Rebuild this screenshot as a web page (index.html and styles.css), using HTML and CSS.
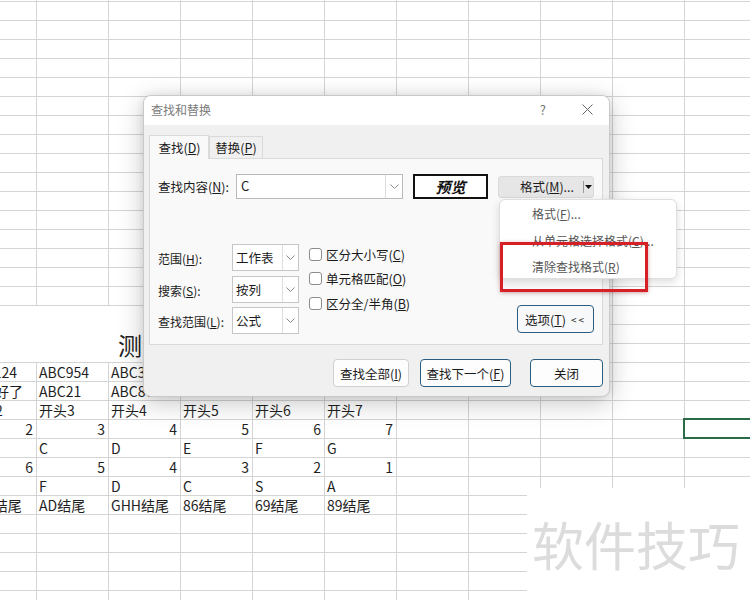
FILE: index.html
```html
<!DOCTYPE html>
<html lang="zh-CN">
<head>
<meta charset="utf-8">
<title>查找和替换</title>
<link rel="stylesheet" href="styles.css">
</head>
<body>
<div class="sheet">
  <div class="table">
    <div class="title-row"><span>测试数据</span></div>
    <div class="row"><div class="cell">ABC124</div><div class="cell">ABC954</div><div class="cell">ABC321</div><div class="cell">ABC66</div><div class="cell">ABC77</div><div class="cell">ABC88</div></div>
    <div class="row"><div class="cell">准备好了</div><div class="cell">ABC21</div><div class="cell">ABC87</div><div class="cell">ABC12</div><div class="cell">ABC13</div><div class="cell">ABC14</div></div>
    <div class="row"><div class="cell">开头2</div><div class="cell">开头3</div><div class="cell">开头4</div><div class="cell">开头5</div><div class="cell">开头6</div><div class="cell">开头7</div></div>
    <div class="row"><div class="cell num">2</div><div class="cell num">3</div><div class="cell num">4</div><div class="cell num">5</div><div class="cell num">6</div><div class="cell num">7</div></div>
    <div class="row"><div class="cell">B</div><div class="cell">C</div><div class="cell">D</div><div class="cell">E</div><div class="cell">F</div><div class="cell">G</div></div>
    <div class="row"><div class="cell num">6</div><div class="cell num">5</div><div class="cell num">4</div><div class="cell num">3</div><div class="cell num">2</div><div class="cell num">1</div></div>
    <div class="row"><div class="cell">G</div><div class="cell">F</div><div class="cell">D</div><div class="cell">C</div><div class="cell">S</div><div class="cell">A</div></div>
    <div class="row"><div class="cell">ABC结尾</div><div class="cell">AD结尾</div><div class="cell">GHH结尾</div><div class="cell">86结尾</div><div class="cell">69结尾</div><div class="cell">89结尾</div></div>
  </div>

  <div class="selected-cell"></div>
  <div class="watermark">软件技巧</div>

  <div class="dialog">
    <div class="titlebar">
      <span class="dlg-title">查找和替换</span>
      <span class="help">?</span>
      <svg class="close" width="11" height="11" viewBox="0 0 11 11"><path d="M0.5 0.5L10.5 10.5M10.5 0.5L0.5 10.5"/></svg>
    </div>
    <div class="dlg-body">
      <div class="tabs">
        <div class="tab active"><span>查找(<u>D</u>)</span></div>
        <div class="tab"><span>替换(<u>P</u>)</span></div>
      </div>
      <div class="panel">
        <div class="find-row">
          <span class="find-label">查找内容(<u>N</u>):</span>
          <div class="combo">
            <span class="combo-text">C</span>
            <span class="combo-btn"><svg width="9" height="5" viewBox="0 0 9 5"><path d="M0.5 0.5L4.5 4.5L8.5 0.5"/></svg></span>
          </div>
          <div class="preview">预览</div>
          <div class="format-btn">
            <span class="format-text">格式(<u>M</u>)...</span>
            <span class="format-arrow"><svg width="7" height="4" viewBox="0 0 7 4"><path d="M0 0H7L3.5 4Z"/></svg></span>
          </div>
        </div>
        <div class="opts">
          <div class="opt-grid">
            <span class="opt-label">范围(<u>H</u>):</span>
            <div class="select"><span class="select-text">工作表</span><span class="select-btn"><svg width="9" height="5" viewBox="0 0 9 5"><path d="M0.5 0.5L4.5 4.5L8.5 0.5"/></svg></span></div>
            <span class="opt-label">搜索(<u>S</u>):</span>
            <div class="select"><span class="select-text">按列</span><span class="select-btn"><svg width="9" height="5" viewBox="0 0 9 5"><path d="M0.5 0.5L4.5 4.5L8.5 0.5"/></svg></span></div>
            <span class="opt-label">查找范围(<u>L</u>):</span>
            <div class="select"><span class="select-text">公式</span><span class="select-btn"><svg width="9" height="5" viewBox="0 0 9 5"><path d="M0.5 0.5L4.5 4.5L8.5 0.5"/></svg></span></div>
          </div>
          <div class="checks">
            <div class="check"><span class="box"></span><span class="check-text">区分大小写(<u>C</u>)</span></div>
            <div class="check"><span class="box"></span><span class="check-text">单元格匹配(<u>O</u>)</span></div>
            <div class="check"><span class="box"></span><span class="check-text">区分全/半角(<u>B</u>)</span></div>
          </div>
          <div class="btn accent opt-btn"><span>选项(<u>T</u>)</span><span class="chev">&lt;&lt;</span></div>
        </div>
      </div>
      <div class="actions">
        <div class="btn find-all"><span>查找全部(<u>I</u>)</span></div>
        <div class="btn accent find-next"><span>查找下一个(<u>F</u>)</span></div>
        <div class="btn accent close-btn"><span>关闭</span></div>
      </div>
    </div>
  </div>

  <div class="menu">
    <div class="menu-item">格式(<u>F</u>)...</div>
    <div class="menu-item">从单元格选择格式(<u>C</u>)...</div>
    <div class="menu-item">清除查找格式(<u>R</u>)</div>
  </div>
  <div class="highlight"></div>
</div>
</body>
</html>
```

FILE: styles.css
```css
* { box-sizing: border-box; }
html, body { margin: 0; padding: 0; }
body {
  width: 750px;
  height: 600px;
  overflow: hidden;
  font-family: "Noto Sans CJK SC", "Noto Sans", sans-serif;
  color: #1b1b1b;
}
u { text-decoration: underline; text-underline-offset: 1px; }

/* spreadsheet */
.sheet {
  position: relative;
  width: 750px;
  height: 600px;
  overflow: hidden;
  padding-top: 306px;
  background-color: #fff;
  background-image:
    linear-gradient(to right, #d4d4d4 1px, transparent 1px),
    linear-gradient(to bottom, #d4d4d4 1px, transparent 1px);
  background-size: 72px 19px;
  background-position: 36px 1px;
}
.table { margin-left: -36px; }
.title-row {
  width: 432px;
  height: 56px;
  background: #fff;
  display: flex;
  align-items: flex-end;
  padding-left: 154px;
  padding-bottom: 2px;
  font-size: 24px;
  line-height: 30px;
  color: #222;
}
.row { display: flex; height: 19px; }
.cell {
  width: 72px;
  flex: none;
  font-size: 14px;
  line-height: 17px;
  padding: 2px 3px 0;
  white-space: nowrap;
  overflow: hidden;
  color: #1f1f1f;
}
.cell.num { text-align: right; }

.selected-cell {
  position: absolute;
  left: 683px;
  top: 418px;
  width: 72px;
  height: 21px;
  border: 2px solid #2a6b47;
}

.watermark {
  position: absolute;
  left: 527px;
  top: 488px;
  width: 223px;
  height: 112px;
  background: #fff;
  display: flex;
  align-items: center;
  padding-left: 5px;
  font-size: 52px;
  line-height: 56px;
  color: #dcdcdc;
  white-space: nowrap;
}

/* dialog */
.dialog {
  position: absolute;
  left: 143px;
  top: 95px;
  width: 467px;
  height: 302px;
  border: 1px solid #c9c9c9;
  border-radius: 8px;
  overflow: hidden;
  display: flex;
  flex-direction: column;
  background: #f0f0f0;
  box-shadow: 0 6px 26px rgba(0, 0, 0, 0.22), 0 0 8px rgba(0, 0, 0, 0.08);
  font-size: 12.5px;
}
.titlebar {
  height: 29px;
  flex: none;
  background: #fff;
  display: flex;
  align-items: center;
  padding-left: 7px;
  padding-bottom: 2px;
}
.dlg-title { flex: 1; font-size: 12px; color: #7a7a7a; }
.help { font-size: 13px; color: #777; margin-right: 36px; }
.close { margin-right: 16px; }
.close path { stroke: #666; stroke-width: 1; fill: none; }

.dlg-body {
  flex: 1;
  padding: 10px 6px 0 5px;
  display: flex;
  flex-direction: column;
}
.tabs { display: flex; align-items: flex-end; height: 23px; }
.tab {
  height: 22px;
  border: 1px solid #dadada;
  border-bottom: none;
  background: #f0f0f0;
  display: flex;
  align-items: center;
  justify-content: center;
  width: 54px;
  color: #1b1b1b;
}
.tab.active {
  width: 60px;
  height: 24px;
  margin-bottom: -1px;
  background: #f9f9f9;
  position: relative;
  z-index: 1;
  padding-left: 1px;
}
.panel {
  height: 187px;
  background: #f9f9f9;
  border: 1px solid #dadada;
  padding: 15px 8px 10px 8px;
}
.find-row { display: flex; align-items: center; height: 25px; }
.find-label { width: 78px; flex: none; white-space: nowrap; }
.combo {
  width: 167px;
  height: 25px;
  background: #fff;
  border: 1px solid #b9b9b9;
  display: flex;
}
.combo-text { flex: 1; padding-left: 4px; line-height: 21px; font-size: 13px; }
.combo-btn {
  width: 17px;
  border-left: 1px solid #dcdcdc;
  display: flex;
  align-items: center;
  justify-content: center;
}
svg path { fill: none; stroke: #8a8a8a; stroke-width: 1; }
.preview {
  margin-left: 10px;
  width: 75px;
  height: 25px;
  border: 2px solid #111;
  background: #fff;
  display: flex;
  align-items: center;
  justify-content: center;
  font-size: 15px;
  font-weight: bold;
  font-style: italic;
  color: #111;
}
.format-btn {
  margin-left: 10px;
  width: 96px;
  height: 22px;
  background: #e6e6e6;
  border: 1px solid #dadada;
  border-radius: 3px;
  display: flex;
  align-items: center;
}
.format-text { width: 84px; padding-left: 21px; white-space: nowrap; }
.format-arrow {
  height: 12px;
  flex: 1;
  border-left: 1px solid #9a9a9a;
  display: flex;
  align-items: center;
  justify-content: center;
}
.format-arrow svg path { fill: #111; stroke: none; }

.opts { display: flex; margin-top: 45px; }
.opt-grid {
  display: grid;
  grid-template-columns: 74px 67px;
  grid-auto-rows: 27px;
  row-gap: 4.5px;
  align-items: center;
}
.opt-label { padding-top: 2px; font-size: 12px; white-space: nowrap; }
.select {
  height: 27px;
  background: #fff;
  border: 1px solid #c6c6c6;
  display: flex;
}
.select-text { flex: 1; padding-left: 3px; line-height: 25px; }
.select-btn {
  width: 16px;
  border-left: 1px solid #dedede;
  display: flex;
  align-items: center;
  justify-content: center;
}
.checks {
  margin-left: 10px;
  display: flex;
  flex-direction: column;
  gap: 4.5px;
}
.check { height: 20px; display: flex; align-items: center; gap: 4px; white-space: nowrap; }
.box {
  width: 13px;
  height: 13px;
  border: 1px solid #8c8c8c;
  border-radius: 3px;
  background: #fff;
}
.btn {
  height: 28px;
  background: #fdfdfd;
  border: 1px solid #d0d0d0;
  border-radius: 4px;
  display: flex;
  align-items: center;
  justify-content: center;
  white-space: nowrap;
}
.btn.accent { border-color: #2a5d80; }
.opt-btn {
  margin-left: auto;
  align-self: flex-end;
  margin-bottom: 1px;
  width: 77px;
  background: #f7f8f9;
}
.chev { margin-left: 5px; font-size: 10px; letter-spacing: 2px; }

.actions {
  display: flex;
  justify-content: flex-end;
  margin-top: 14px;
}
.find-all { width: 76px; }
.find-next { width: 91px; margin-left: 11px; }
.close-btn { width: 73px; margin-left: 19px; }

/* dropdown menu */
.menu {
  position: absolute;
  left: 499px;
  top: 199px;
  width: 178px;
  height: 80px;
  background: #fff;
  border: 1px solid #e0e0e0;
  border-radius: 6px;
  box-shadow: 0 3px 8px rgba(0, 0, 0, 0.14);
  padding-top: 1px;
  font-size: 12px;
  color: #555;
}
.menu-item { height: 26.5px; line-height: 26px; padding-left: 32px; white-space: nowrap; }

.highlight {
  position: absolute;
  left: 500px;
  top: 242px;
  width: 148px;
  height: 50px;
  border: 3px solid #d62027;
  box-shadow: 0 1px 4px rgba(120, 0, 0, 0.35);
}
```
